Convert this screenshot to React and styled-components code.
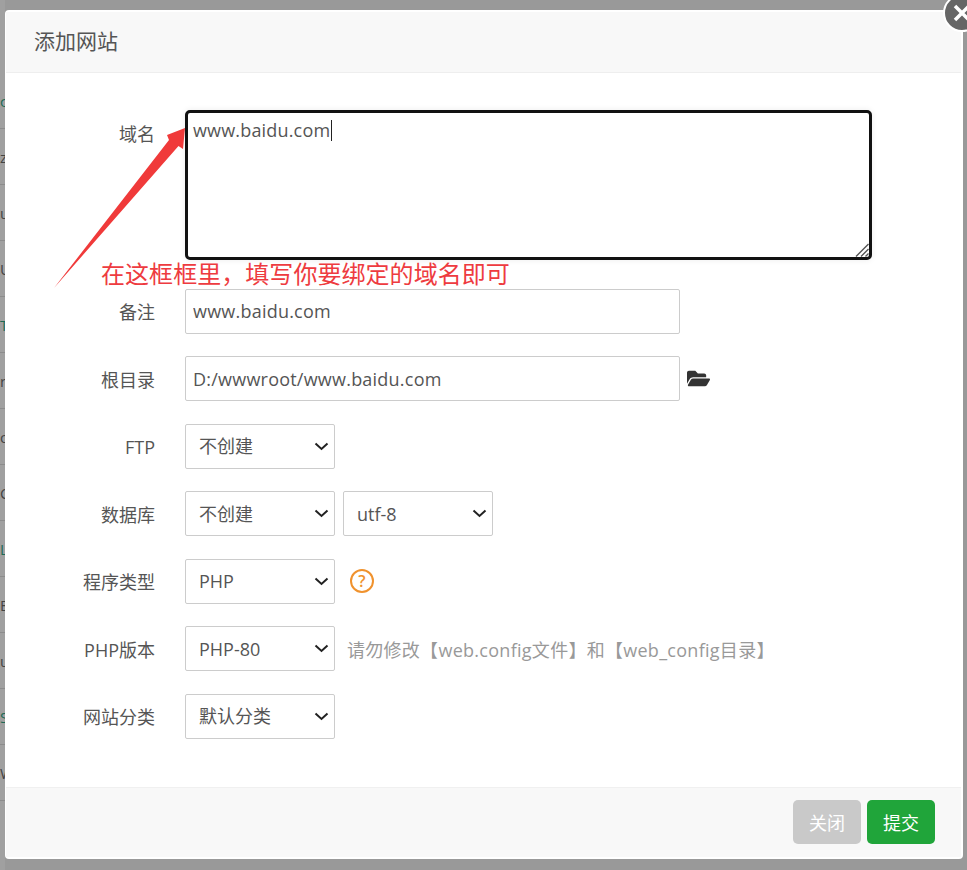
import React from "react";
import styled, { createGlobalStyle } from "styled-components";
import { FaFolderOpen } from "react-icons/fa";

const FONT = `"Open Sans", "Noto Sans CJK SC", sans-serif`;

const Global = createGlobalStyle`
  html, body { margin: 0; padding: 0; height: 100%; overflow: hidden; background: #9a9a9a; }
  #root { height: 100%; }
  * { box-sizing: border-box; }
`;

const Page = styled.div`
  width: 967px; height: 870px; display: flex; overflow: hidden; position: relative;
  background: #999; font-family: ${FONT};
`;
const Backdrop = styled.div`
  width: 5px; flex: none; overflow: hidden; padding-top: 73px;
  display: flex; flex-direction: column; background: #a0a0a0;
`;
const BackRow = styled.div`
  height: 56px; flex: none; border-bottom: 1px solid #8c8c8c; display: flex; align-items: center;
  font-size: 15px; color: ${p => (p.$teal ? "#1d6a55" : "#444")}; line-height: 1;
  white-space: nowrap; padding-top: 2px;
`;
const Dialog = styled.div`
  width: 958px; height: 849px; margin-top: 10px; flex: none; position: relative;
  background: #fff; border-radius: 4px; border: 2px solid #fff; border-left-width: 1px;
  display: flex; flex-direction: column; color: #555;
`;
const Header = styled.div`
  height: 61px; flex: none; background: #f8f8f8; border-bottom: 1px solid #eee;
  padding: 0 0 0 28px; font-size: 21px; line-height: 58px; color: #555;
`;
const Body = styled.div`
  flex: 1; padding-top: 37px; display: flex; flex-direction: column;
`;
const Row = styled.div`
  display: flex; align-items: ${p => (p.$top ? "flex-start" : "center")}; height: ${p => p.$h || 45}px; flex: none;
  margin-top: ${p => p.$gap ?? 22.5}px;
`;
const Label = styled.div`
  width: 149px; flex: none; text-align: right; font-size: 18px; color: #555; line-height: 24px;
  padding-top: ${p => p.$pt || 2}px;
`;
const Field = styled.div`
  margin-left: 30px; display: flex; align-items: center; gap: 8px;
`;
const AreaBox = styled.div`
  position: relative; width: 687px; height: 150px; border: 3px solid #111; border-radius: 5px; background: #fff;
  padding: 4px 5px; font-size: 18px; line-height: 26px; color: #555; letter-spacing: .17px;
  box-shadow: 0 0 6px rgba(0,0,0,.08);
`;
const Caret = styled.span`
  display: inline-block; width: 1px; height: 21px; background: #222; vertical-align: -4px; margin-left: 1px;
`;
const Grip = styled.svg`
  position: absolute; right: 0; bottom: 0;
`;
const TextInput = styled.input`
  width: 495px; height: 45px; border: 1px solid #ccc; border-radius: 2px; padding: 0 7px;
  font: 18px ${FONT}; letter-spacing: .22px; color: #555; background: #fff; outline: none;
`;
const SelectWrap = styled.div`
  position: relative; width: 150px; height: 45px;
`;
const Select = styled.select`
  appearance: none; width: 100%; height: 100%; border: 1px solid #ccc; border-radius: 2px; padding: 0 13px;
  font: 18px ${FONT}; color: #555; background: #fff; outline: none;
`;
const Chevron = styled.svg`
  position: absolute; right: 6px; top: 18px; pointer-events: none;
`;
const FolderBtn = styled.span`
  display: inline-flex; color: #333; font-size: 23px; margin-left: -1px;
`;
const Help = styled.span`
  width: 24px; height: 24px; border: 2px solid #f0922d; border-radius: 50%; color: #f0922d;
  font-size: 16px; line-height: 20px; text-align: center; margin: 0 0 1px 7px; font-weight: 600;
`;
const Tip = styled.span`
  font-size: 18px; color: #999; margin-left: 4px; white-space: nowrap; letter-spacing: .28px;
`;
const Footer = styled.div`
  height: 70px; flex: none; background: #f8f8f8; border-top: 1px solid #f0f0f0;
  display: flex; justify-content: flex-end; gap: 6px; padding: 12px 26px 0 0;
`;
const Button = styled.button`
  width: 68px; height: 44px; border: none; border-radius: 5px; padding: 0; color: #fff;
  font: 18px ${FONT}; background: ${p => (p.$primary ? "#20a53a" : "#c9c9c9")};
`;
const Close = styled.div`
  position: absolute; left: 943px; top: -6px; width: 38px; height: 38px; border-radius: 50%;
  background: #666; border: 2px solid #fff; display: flex; align-items: center; justify-content: center;
`;
const Note = styled.div`
  position: absolute; left: 101px; top: 259px; font-size: 24px; line-height: 30px; color: #ee3b40; white-space: nowrap; letter-spacing: .05px;
`;
const Arrow = styled.svg`
  position: absolute; left: 0; top: 0; pointer-events: none;
`;

const back = [["c", 1], ["z"], ["u"], ["U"], ["T", 1], ["r"], ["o"], ["C"], ["L", 1], ["E"], ["u"], ["S", 1], ["W"]];

const Choice = ({ value }) => (
  <SelectWrap>
    <Select><option>{value}</option></Select>
    <Chevron width="15" height="9" viewBox="0 0 15 9">
      <path d="M1.5 1.5 L7.5 7 L13.5 1.5" stroke="#222" strokeWidth="2" fill="none" />
    </Chevron>
  </SelectWrap>
);

export default function App() {
  return (
    <Page>
      <Global />
      <Backdrop>
        {back.map(([t, teal], i) => <BackRow key={i} $teal={teal}>{t}</BackRow>)}
      </Backdrop>
      <Dialog>
        <Header>添加网站</Header>
        <Body>
          <Row $h={150} $gap={0} $top>
            <Label $pt={12}>域名</Label>
            <Field>
              <AreaBox>
                www.baidu.com<Caret />
                <Grip width="14" height="14" viewBox="0 0 14 14">
                  <path d="M1 13.5 L13.5 1 M6 13.5 L13.5 6 M10.5 13.5 L13.5 10.5" stroke="#555" strokeWidth="1.4" fill="none" />
                </Grip>
              </AreaBox>
            </Field>
          </Row>
          <Row $gap={28.9}>
            <Label>备注</Label>
            <Field><TextInput defaultValue="www.baidu.com" /></Field>
          </Row>
          <Row>
            <Label>根目录</Label>
            <Field><TextInput defaultValue="D:/wwwroot/www.baidu.com" /><FolderBtn><FaFolderOpen /></FolderBtn></Field>
          </Row>
          <Row>
            <Label>FTP</Label>
            <Field><Choice value="不创建" /></Field>
          </Row>
          <Row>
            <Label>数据库</Label>
            <Field><Choice value="不创建" /><Choice value="utf-8" /></Field>
          </Row>
          <Row>
            <Label>程序类型</Label>
            <Field><Choice value="PHP" /><Help>?</Help></Field>
          </Row>
          <Row>
            <Label>PHP版本</Label>
            <Field><Choice value="PHP-80" /><Tip>请勿修改【web.config文件】和【web_config目录】</Tip></Field>
          </Row>
          <Row>
            <Label>网站分类</Label>
            <Field><Choice value="默认分类" /></Field>
          </Row>
        </Body>
        <Footer>
          <Button>关闭</Button>
          <Button $primary>提交</Button>
        </Footer>
      </Dialog>
      <Close>
        <svg width="20" height="20" viewBox="0 0 20 20">
          <path d="M3 3 L17 17 M17 3 L3 17" stroke="#fff" strokeWidth="3.5" fill="none" />
        </svg>
      </Close>
      <Note>在这框框里，填写你要绑定的域名即可</Note>
      <Arrow width="200" height="300" viewBox="0 0 200 300">
        <polygon points="54,288 169,140 167,135 185,128 183,149 178.5,146" fill="#f03a3a" />
      </Arrow>
    </Page>
  );
}
